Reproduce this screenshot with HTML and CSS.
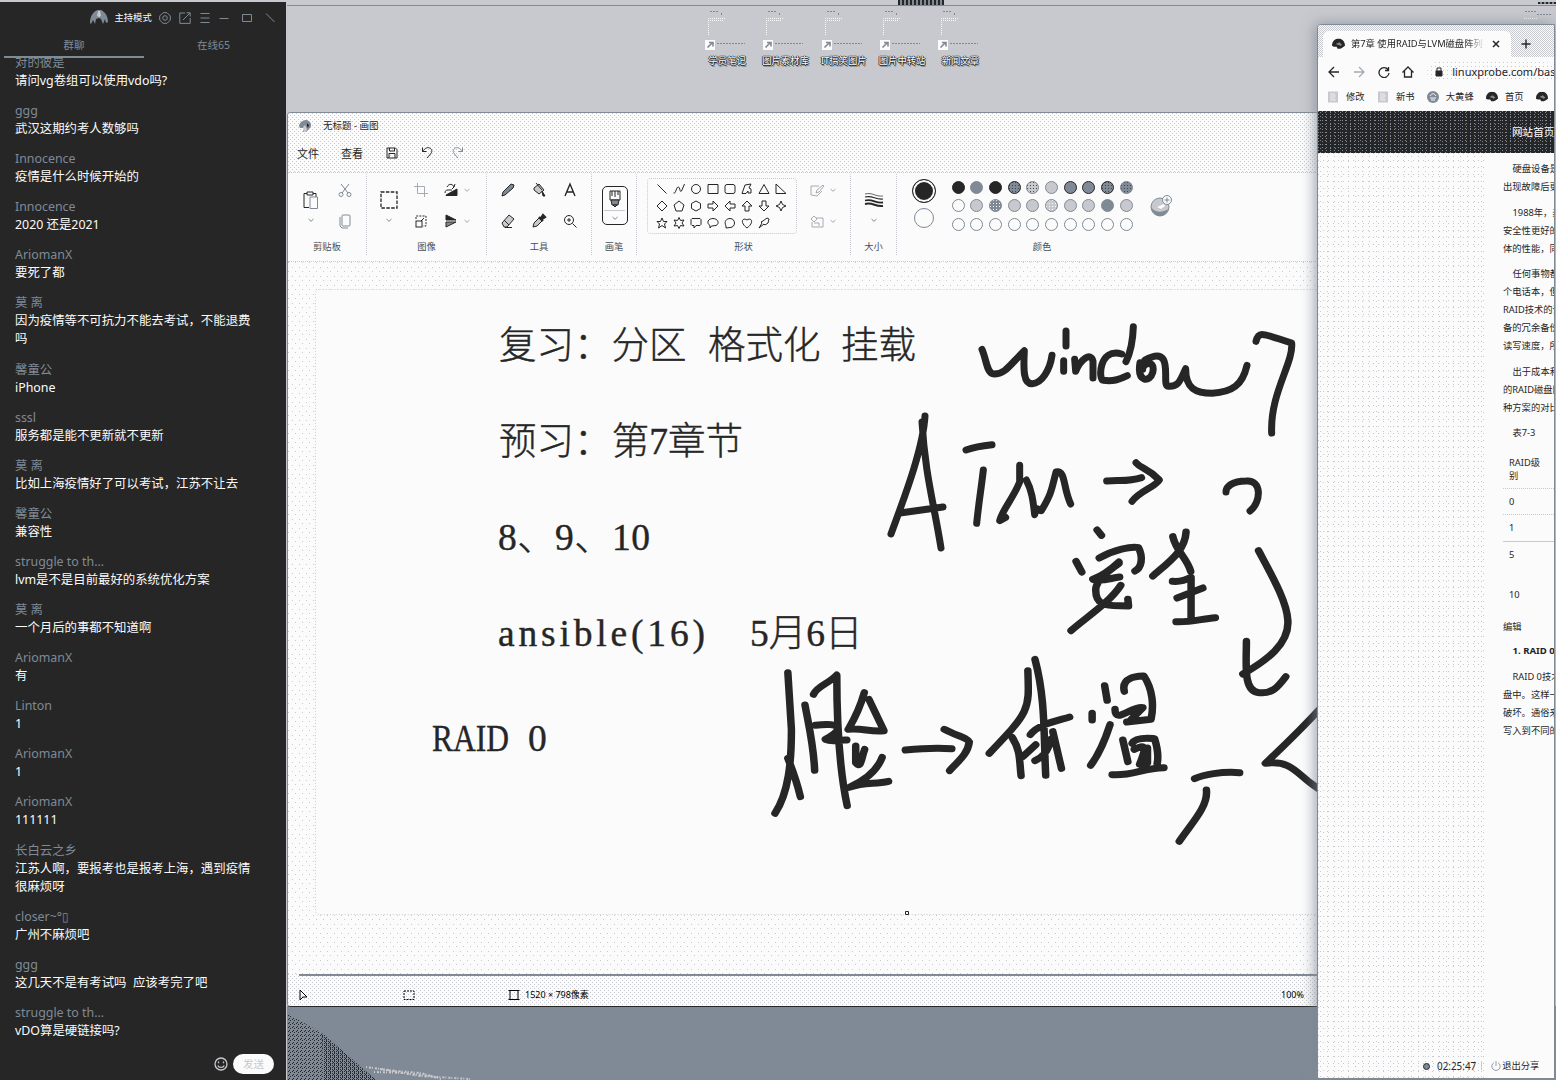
FILE: index.html
```html
<!DOCTYPE html>
<html lang="zh-CN">
<head>
<meta charset="utf-8">
<title>无标题 - 画图</title>
<link rel="stylesheet" href="styles.css">
</head>
<body>
<svg class="defs" width="0" height="0">
  <symbol id="caret" viewBox="0 0 8 8"><path d="M1.500 3 4 5.300 6.500 3"/></symbol>
  <symbol id="brand" viewBox="0 0 14 12"><path d="M0 8C0 2 4 0 7 0s7 2 7 8l-3 2-2 1H6L5 9H2z" fill="#262626" stroke="none"/><path d="m4 6 4-2 3 3-2 1-2-1z" fill="#7f8a96" stroke="none"/></symbol>
  <symbol id="pagemark" viewBox="0 0 12 12"><path d="M1 .5h10v11H1z" fill="#c8c9ce" stroke="none"/><path d="M3 3h5M3 5h6M3 7h5M3 9h6" stroke="#fbfbfb" stroke-width=".8"/></symbol>
</svg>
<div class="screen">
  <aside class="chat">
    <header class="chat-bar">
      <svg class="logo" viewBox="0 0 18 16"><path d="M0 13C0 5 4 1 8 0l3 0c4 2 7 6 7 12l-2 1-1-4-2 5-2-5-2-1-3 1-1 5-2-4-2 4z"/><path class="lit" d="m8 1 2 0 1 5-2 1-2-1z"/></svg>
      <span class="mode">主持模式</span>
      <svg viewBox="0 0 12 12"><path d="M4 .7h4L11.300 4v4L8 11.300H4L.7 8V4z"/><circle cx="6" cy="6" r="2.300"/></svg>
      <svg viewBox="0 0 12 12"><path d="M6 1H.8v10.400h10.400V6M4 8l7-7M7.500.8h3.700v3.700"/></svg>
      <svg viewBox="0 0 12 12"><path d="M1.500 1.500h9M1.500 6h9M1.500 10.500h9"/></svg>
      <svg viewBox="0 0 12 12"><path d="M1.500 6.500h9"/></svg>
      <svg viewBox="0 0 12 12"><path d="M1.500 2.500h9v7h-9z"/></svg>
      <svg viewBox="0 0 12 12"><path d="m2 1.500 8.500 8.500"/></svg>
    </header>
    <nav class="tabs"><span class="tab on">群聊</span><span class="tab">在线65</span></nav>
    <div class="messages">
      <div class="msg"><b>对的彼是</b><p>请问vg卷组可以使用vdo吗?</p></div>
      <div class="msg"><b>ggg</b><p>武汉这期约考人数够吗</p></div>
      <div class="msg"><b>Innocence</b><p>疫情是什么时候开始的</p></div>
      <div class="msg"><b>Innocence</b><p>2020 还是2021</p></div>
      <div class="msg"><b>AriomanX</b><p>要死了都</p></div>
      <div class="msg"><b>莫 离</b><p>因为疫情等不可抗力不能去考试，不能退费吗</p></div>
      <div class="msg"><b>馨童公</b><p>iPhone</p></div>
      <div class="msg"><b>sssl</b><p>服务都是能不更新就不更新</p></div>
      <div class="msg"><b>莫 离</b><p>比如上海疫情好了可以考试，江苏不让去</p></div>
      <div class="msg"><b>馨童公</b><p>兼容性</p></div>
      <div class="msg"><b>struggle to th...</b><p>lvm是不是目前最好的系统优化方案</p></div>
      <div class="msg"><b>莫 离</b><p>一个月后的事都不知道啊</p></div>
      <div class="msg"><b>AriomanX</b><p>有</p></div>
      <div class="msg"><b>Linton</b><p>1</p></div>
      <div class="msg"><b>AriomanX</b><p>1</p></div>
      <div class="msg"><b>AriomanX</b><p>111111</p></div>
      <div class="msg"><b>长白云之乡</b><p>江苏人啊，要报考也是报考上海，遇到疫情很麻烦呀</p></div>
      <div class="msg"><b>closer~&#xb0;▯</b><p>广州不麻烦吧</p></div>
      <div class="msg"><b>ggg</b><p>这几天不是有考试吗&nbsp; 应该考完了吧</p></div>
      <div class="msg"><b>struggle to th...</b><p>vDO算是硬链接吗?</p></div>
    </div>
    <footer class="composer">
      <svg viewBox="0 0 14 14"><circle cx="7" cy="7" r="6"/><path d="M4.500 4.500v1.800M9.500 4.500v1.800M3.800 8.500c1 2.600 5.400 2.600 6.400 0"/></svg>
      <button>发送</button>
    </footer>
  </aside>

  <main class="desktop">
    <div class="strip"><i></i><i class="corner"></i></div>
    <div class="shortcuts">
      <div class="shortcut"><svg viewBox="0 0 44 44"><path class="fold" d="M3.500 24V7.500h17M5 9.500h14"/><path class="edge" d="M5 .5h9M16.500 2v3M12 32.500h28"/><path class="plate" d="M0 29h10v10H0z"/><path class="arrow" d="m2.500 36.500 5-5M4 31.500h4v4"/></svg><span>学员笔记</span></div>
      <div class="shortcut"><svg viewBox="0 0 44 44"><path class="fold" d="M3.500 24V7.500h17M5 9.500h14"/><path class="edge" d="M5 .5h9M16.500 2v3M12 32.500h28"/><path class="plate" d="M0 29h10v10H0z"/><path class="arrow" d="m2.500 36.500 5-5M4 31.500h4v4"/></svg><span>图片素材库</span></div>
      <div class="shortcut"><svg viewBox="0 0 44 44"><path class="fold" d="M3.500 24V7.500h17M5 9.500h14"/><path class="edge" d="M5 .5h9M16.500 2v3M12 32.500h28"/><path class="plate" d="M0 29h10v10H0z"/><path class="arrow" d="m2.500 36.500 5-5M4 31.500h4v4"/></svg><span>IT搞笑图片</span></div>
      <div class="shortcut"><svg viewBox="0 0 44 44"><path class="fold" d="M3.500 24V7.500h17M5 9.500h14"/><path class="edge" d="M5 .5h9M16.500 2v3M12 32.500h28"/><path class="plate" d="M0 29h10v10H0z"/><path class="arrow" d="m2.500 36.500 5-5M4 31.500h4v4"/></svg><span>图片中转站</span></div>
      <div class="shortcut"><svg viewBox="0 0 44 44"><path class="fold" d="M3.500 24V7.500h17M5 9.500h14"/><path class="edge" d="M5 .5h9M16.500 2v3M12 32.500h28"/><path class="plate" d="M0 29h10v10H0z"/><path class="arrow" d="m2.500 36.500 5-5M4 31.500h4v4"/></svg><span>新闻文章</span></div>
      <svg class="far" viewBox="0 0 30 12"><path class="edge" d="M2 .5h11M14 3.500h14"/><path class="fold" d="M1 7.500h13"/></svg>
    </div>
    <svg class="wallpaper" viewBox="0 0 1030 73">
      <defs><pattern id="grain" width="4" height="4" patternUnits="userSpaceOnUse"><path d="M0 0h1v1H0zM2 1h1v1H2zM1 3h1v1H1z" fill="#262626"/></pattern>
      <pattern id="densegrain" width="2" height="2" patternUnits="userSpaceOnUse"><path d="M0 0h1v1H0z" fill="#262626"/></pattern></defs>
      <path d="M0 7 34 26 88 73H0z" fill="url(#grain)"/><path d="m34 26 54 47H36z" fill="url(#densegrain)"/>
      <path d="m78 60 30 4 25 2 20 6M86 65l30 1 32 4M92 62l40 7 50 3" fill="none" stroke="#c8c9ce" stroke-width="2" stroke-dasharray="1 2 2 1"/>
    </svg>

    <section class="paint">
      <div class="paint-top">
        <div class="title"><svg viewBox="0 0 12 12"><path d="M0 6C1 1 5 0 8 0c5 2 5 7 2 9l-3 3H4l1-4H1z" fill="#7f8a96"/><path d="m4 7 2-2 2 4-1 3H5z" fill="#c8c9ce"/><path d="m8 3 2 2-1 3-1-2z" fill="#262626"/></svg><span>无标题 - 画图</span></div>
        <div class="menu"><span>文件</span><span>查看</span>
          <svg viewBox="0 0 12 12"><path d="M1 1h8.500L11 2.500V11H1zM3.500 1v3h5V1M3 11V6.500h6V11"/></svg>
          <svg class="undo" viewBox="0 0 12 12"><path d="M1.500.5v4h4M1.500 4.500C4 1 7-.5 9.500 1.500c3 3 .5 5-3.500 9.500"/></svg>
          <svg class="redo" viewBox="0 0 12 12"><path d="M10.500.5v4h-4M10.500 4.500C8 1 5-.5 2.500 1.500c-3 3-.5 5 3.500 9.500"/></svg>
        </div>
      </div>
      <div class="ribbon">
        <div class="group clip"><div class="tools">
          <div class="tall"><svg class="i20" viewBox="0 0 20 20"><path d="M8 17.500H3v-14h3M12 3.500h3V7M6 2h6v3H6z"/><path class="mid" d="M9 7h7.500v11.500H9z"/></svg><svg class="car"><use href="#caret"/></svg></div>
          <svg class="mid" viewBox="0 0 16 16"><path d="m4 2 7 9M12 2l-7 9"/><circle cx="4" cy="12.500" r="2"/><circle cx="12" cy="12.500" r="2"/></svg>
          <svg class="mid" viewBox="0 0 16 16"><rect x="5" y="2" width="8" height="11" rx="1"/><path d="M3 4v9l2 2h6"/></svg>
        </div><span class="cap">剪贴板</span></div>
        <div class="group image"><div class="tools">
          <div class="tall"><svg class="i20" viewBox="0 0 20 20"><rect x="2" y="2" width="16" height="16" stroke-dasharray="3.500 1.400" stroke-width="1.300"/></svg><svg class="car"><use href="#caret"/></svg></div>
          <svg class="pale" viewBox="0 0 16 16"><path d="M4.500 1v10.500H15M1 4.500h10.500V15"/></svg>
          <svg class="c4" viewBox="0 0 16 16"><path d="M4 5c2-4 6-3 7 0l-2 2M11 5l1-3M2 11c0-2 1-3 3-3h4"/><path d="m3 13 11-6v6.500H3z" fill="#262626"/></svg>
          <svg class="car pale"><use href="#caret"/></svg>
          <svg class="c2" viewBox="0 0 16 16"><path d="M3 6V3h10v10h-3" stroke-dasharray="2 1.200"/><rect x="3" y="8" width="6" height="6"/><path d="m8 8 3-3"/></svg>
          <svg class="c4" viewBox="0 0 16 16"><path d="m3 2 10 5H3z" fill="#262626"/><path d="M3 9h10L3 14z" fill="#7f8a96"/></svg>
          <svg class="car pale"><use href="#caret"/></svg>
        </div><span class="cap">图像</span></div>
        <div class="group kit"><div class="tools">
          <svg viewBox="0 0 16 16"><path d="m2 14 1-4 8-8 3 1-1 3-8 7z" fill="#7f8a96"/></svg>
          <svg viewBox="0 0 16 16"><path d="m3 6 5-4 5 6-5 4-5-4zM5 1l6 7" fill="#c8c9ce"/><path d="m11 9 3 5h-2z" fill="#262626"/></svg>
          <svg viewBox="0 0 16 16"><path d="M3 14 8 2l5 12M5 10h6" stroke-width="1.400"/></svg>
          <svg viewBox="0 0 16 16"><path d="m2 10 7-8 5 4-7 8H4z" fill="#c8c9ce"/><path d="m4 7 5 5M5 14.500h7"/></svg>
          <svg viewBox="0 0 16 16"><path d="m2 14 1-4 5-5 3 3-5 5z" fill="#c8c9ce"/><path d="m8 4 4 4M10 5l2-3 2 2-3 2z" stroke-width="2.200"/></svg>
          <svg viewBox="0 0 16 16"><circle cx="7" cy="7" r="4.500"/><path d="m10.500 10.500 4 4M7 5v4M5 7h4"/></svg>
        </div><span class="cap">工具</span></div>
        <div class="group brush"><div class="tools"><div class="brush-btn">
          <svg viewBox="0 0 14 20"><path d="M2 2h10v9H2z"/><path d="M4 2v5M7 2v6M10 2v4"/><path d="M3 11h8l-1 5H4z" fill="#7f8a96"/><path d="M5 16h4l-2 2z" fill="#7f8a96"/></svg><i></i><svg class="car"><use href="#caret"/></svg></div>
        </div><span class="cap">画笔</span></div>
        <div class="group shapes"><div class="tools">
          <div class="gallery">
            <svg viewBox="0 0 12 12"><path d="m1.500 1.500 9 9"/></svg>
            <svg viewBox="0 0 12 12"><path d="M.5 10c2 2 3-7 5-6s1 6 3 4l3-7"/></svg>
            <svg viewBox="0 0 12 12"><circle cx="6" cy="6" r="4.500"/></svg>
            <svg viewBox="0 0 12 12"><path d="M1 1.500h10v9H1z"/></svg>
            <svg viewBox="0 0 12 12"><rect x="1" y="1.500" width="10" height="9" rx="2"/></svg>
            <svg viewBox="0 0 12 12"><path d="M1 10.500 4 2l6-1-2 4 2 1v4H7V8l-2 2.500z"/></svg>
            <svg viewBox="0 0 12 12"><path d="m6 1.500 5 9H1z"/></svg>
            <svg viewBox="0 0 12 12"><path d="M1 1v9.500h10z"/></svg>
            <svg viewBox="0 0 12 12"><path d="m6 1 5 5-5 5-5-5z"/></svg>
            <svg viewBox="0 0 12 12"><path d="m6 1 5 4-2 6H3L1 5z"/></svg>
            <svg viewBox="0 0 12 12"><path d="m6 1 4.500 2.500v5L6 11 1.500 8.500v-5z"/></svg>
            <svg viewBox="0 0 12 12"><path d="M1 4h5V1l5 5-5 5V8H1z"/></svg>
            <svg viewBox="0 0 12 12"><path d="M11 4H6V1L1 6l5 5V8h5z"/></svg>
            <svg viewBox="0 0 12 12"><path d="M4 11V6H1l5-5 5 5H8v5z"/></svg>
            <svg viewBox="0 0 12 12"><path d="M4 1v5H1l5 5 5-5H8V1z"/></svg>
            <svg viewBox="0 0 12 12"><path d="m6 1 1.500 3.500L11 6 7.500 7.500 6 11 4.500 7.500 1 6l3.500-1.500z"/></svg>
            <svg viewBox="0 0 12 12"><path d="m6 1 1.500 3.500H11L8.500 7l1 4L6 8.500 2.500 11l1-4L1 4.500h3.500z"/></svg>
            <svg viewBox="0 0 12 12"><path d="m6 .5 1.500 3 3.500-.5-2 3 2 3-3.500-.5-1.500 3-1.500-3L1 9l2-3-2-3 3.500.5z"/></svg>
            <svg viewBox="0 0 12 12"><path d="M2 1.500h8l1 1v5l-1 1H6L4 11V8.500H2l-1-1v-5z"/></svg>
            <svg viewBox="0 0 12 12"><path d="M4.500 9 3 11V8.500C-1 6 1 1.500 6 1.500s7 5 3 7z"/></svg>
            <svg viewBox="0 0 12 12"><path d="M2 11V9C-.5 4 3 1.500 6 1.500c6 0 6 9 0 9z"/></svg>
            <svg viewBox="0 0 12 12"><path d="M6 11C-2 5 2 0 6 3c4-3 8 2 0 8z"/></svg>
            <svg viewBox="0 0 12 12"><path d="m5 4 4-3 2 1-1 4-3 2-1-1-5 4 3-5-1-1z"/></svg>
          </div>
          <div class="shape-opts">
            <svg class="pale" viewBox="0 0 16 16"><path d="M10 4H2v9l6 1 5-5M7 11l1-3 6-5 1 1-5 6z"/></svg><svg class="car pale"><use href="#caret"/></svg>
            <svg class="pale" viewBox="0 0 16 16"><path d="M7 5h7v9H3V9M2 6l3-3 3 3-3 3zM5 10h5v3"/></svg><svg class="car pale"><use href="#caret"/></svg>
          </div>
        </div><span class="cap">形状</span></div>
        <div class="group size"><div class="tools"><div class="tall"><svg class="i20" viewBox="0 0 20 20"><path d="M1 4c8-2 10 3 18 2" stroke-width=".7"/><path d="M1 7c8-2 10 3 18 2" stroke-width="1.200"/><path d="M1 10.500c8-2 10 3 18 2" stroke-width="1.800"/><path d="M1 14c8-2 10 3 18 2" stroke-width="2"/></svg><svg class="car"><use href="#caret"/></svg></div></div><span class="cap">大小</span></div>
        <div class="group colors"><div class="tools">
          <div class="current"><i class="fore"></i><i class="back"></i></div>
          <div class="swatches">
            <i class="k"></i><i class="g"></i><i class="k"></i><i class="g dk dots"></i><i class="l dots"></i><i class="l"></i><i class="g dk"></i><i class="g dk"></i><i class="g dk dots"></i><i class="g dots"></i>
            <i></i><i class="l"></i><i class="g lit"></i><i class="l"></i><i class="l"></i><i class="l lit"></i><i class="l"></i><i class="l"></i><i class="g"></i><i class="l"></i>
            <i></i><i></i><i></i><i></i><i></i><i></i><i></i><i></i><i></i><i></i>
          </div>
          <svg class="wheel" viewBox="0 0 24 24"><circle cx="11" cy="14" r="9" fill="#c8c9ce" stroke="#7f8a96"/><path d="M2 14c4 6 12 6 17 2-1 9-15 10-17-2z" fill="#7f8a96" stroke="none"/><path d="m8 14 7-3 1 2-4 3z" fill="#fbfbfb" stroke="none"/><circle cx="18" cy="7" r="4.500" fill="#fbfbfb" stroke="#7f8a96"/><path d="M18 4.500v5M15.500 7h5" stroke="#7f8a96"/></svg>
        </div><span class="cap">颜色</span></div>
      </div>
      <div class="work">
        <svg class="board" viewBox="288 262 1029 712">
          <rect x="315.500" y="289.500" width="1010" height="625" rx="4" fill="#fbfbfb" stroke="#c8c9ce" stroke-dasharray="1 2"/>
          <g class="typed">
            <text x="499" y="358">复习：分区</text><text x="708" y="358">格式化</text><text x="841" y="358">挂载</text>
            <text x="499" y="454" textLength="244">预习：第7章节</text>
            <text x="498" y="550" textLength="152">8、9、10</text>
            <text x="498" y="646" textLength="207">ansible(16)</text><text x="750" y="646">5月6日</text>
            <text x="432" y="751" textLength="77" lengthAdjust="spacingAndGlyphs">RAID</text><text x="528" y="751">0</text>
          </g>
          <g class="ink" transform="translate(970 310) scale(.33333)">
            <path d="M36 118C50 150 50 192 72 192 105 192 115 170 163 122 160 180 160 222 187 221 215 220 240 180 246 136M288 63v45M281 152v32M314 148l3 36c15-35 45-60 52-30v50M455 132c-70-20-70 80-55 79 30 4 45-2 72-14M490 50c-2 60-12 85-22 105M510 158c-10 60 30 60 38 30 10-40-30-30-30-10M525 150c90-50 50 70 67 78 35 5 40-20 55-52 0 60 30 74 80 74 60-4 90-24 104-84"/>
            <path d="M858 94C866 60 880 72 965 99c6 60-65 150-60 270M-12 420c25-9 50-13 78-16M40 480c-7 60-14 100-20 160M149 466v50c-20 50-50 80-60 116l18-10M169 510c16 30 20 60 25 104 8-30 8-12 20-12 30-50 30-60 44-116 30-5 20 45 44 96M410 513c40-4 60 4 105-10M498 458c15 18 35 15 70 52-18 25-55 30-82 64M768 546c0-18 20-32 60-33 50-5 45 65 12 90"/>
          </g>
          <path class="ink real" d="M891 534C901 506 923 451 925 416M922 422c3 52 12 82 19 126M900 513 943 507"/>
          <g class="ink" transform="translate(760 520) scale(.35714 .33333)">
            <path d="M944 30l12 16M885 124l16 32M950 114C990 90 1040 78 1060 83c14 30 8 60-10 70M1005 126c-30 30-55 45-73 52 25 8 50-4 75-7M1005 130c-20 15-66 50-65 80 0 55 40 45 92 48l-2-20M1010 196c-30 50-95 95-139 136M1156 50c10 45 40 65 50 104M1193 36C1190 95 1140 130 1100 168M1155 184c20 2 35-2 52-12v126M1168 234l72-30M1165 305c40 2 70-8 110-12"/>
            <path d="M1396 92c40 80 80 155 82 210 4 70-60 120-126 160M1362 364c0 70-10 152 36 154 35 4 50-14 74-48M78 458l10 170c0 100-8 190-46 252M78 715c15 40 25 70 35 115M126 555c12 70 24 120 27 196M150 523c10-25 40-30 65-58 0 120 5 270 29 392M155 616c70-10 85 10 28 42 20 10 40 0 60 2M292 518c-16 60-34 90-45 110 40-4 60 8 100 4l-42-94M268 678v50c15 20 15-10 25-40M342 712c-14 40-50 70-92 90 45-18 70-8 110-18M407 690c45-5 80-8 130-4M516 628c35 20 65 25 70 38-5 40-35 60-55 86M750 452c4 120 6 120-108 248M770 418c30 120 24 230 30 348M757 644c20-30 70-40 110-53M706 652c24 40 20 70 25 115M772 674l-35 35M770 722c24-12 35-25 45-65M820 635l24 110"/>
            <path d="M965 497l7 44M930 580v20M980 614c-12 40-25 80-54 122M1020 514c-10-45 40-45 55-46 25 40 28 90 20 130l-68 8M994 568c0 45 45-10 78-5l-35 38M1016 660l14 65M1042 670c10-20 50-15 63-14 10 35 10 60 7 75M1048 688c30-15 36-12 15 45l22-5V684M986 764c60 4 85-20 145-21M1217 776c25-12 75-22 126-18M1250 810c5 50-42 100-76 154M1570 564c-60 70-95 105-155 166 80-12 90 40 155 80"/>
          </g>
          <path d="M905.500 911.500h3v3h-3z" fill="#fbfbfb" stroke="#262626"/>
        </svg>
      </div>
      <div class="status">
        <svg viewBox="0 0 12 12"><path d="M2 1v10l3-3h4z"/></svg>
        <svg viewBox="0 0 12 12"><path d="M1 2h10v8.500H1z" stroke-dasharray="2 1"/></svg>
        <svg viewBox="0 0 12 12"><path d="M2 1.500h8v9H2zM.5 1.500h11M.5 10.500h11"/></svg>
        <span>1520 × 798像素</span><span class="zoom">100%</span>
      </div>
    </section>

    <section class="browser">
      <div class="tabstrip"><div class="page-tab"><svg viewBox="0 0 14 12"><use href="#brand"/></svg><span>第7章 使用RAID与LVM磁盘阵列</span><svg class="x" viewBox="0 0 10 10"><path d="m2 2 6 6M8 2 2 8"/></svg></div><svg class="plus" viewBox="0 0 10 10"><path d="M5 .5v9M.5 5h9"/></svg></div>
      <div class="address">
        <svg viewBox="0 0 12 12"><path d="M11 6H1.500M6 1 1 6l5 5"/></svg>
        <svg class="pale" viewBox="0 0 12 12"><path d="M1 6h9.500M6 1l5 5-5 5"/></svg>
        <svg viewBox="0 0 12 12"><path d="M10 3.500a5 5 0 1 0 1 3.500M10.500 1v3.500H7"/></svg>
        <svg viewBox="0 0 12 12"><path d="M.5 6.500 6 1l5.500 5.500M2.500 5v6h7V5"/></svg>
        <div class="url"><svg viewBox="0 0 8 10"><path d="M1 4h6v5H1z" fill="#262626"/><path d="M2 4V1h4v3"/></svg><span>linuxprobe.com/bas</span></div>
      </div>
      <div class="bookmarks">
        <svg viewBox="0 0 12 12"><use href="#pagemark"/></svg><span>修改</span>
        <svg viewBox="0 0 12 12"><use href="#pagemark"/></svg><span>新书</span>
        <svg class="bee" viewBox="0 0 12 12"><circle cx="6" cy="6" r="6" fill="#7f8a96" stroke="none"/><path d="M3 5c2-3 4-3 6 0M3 7h6M4 9h4" stroke="#fbfbfb"/></svg><span>大黄蜂</span>
        <svg viewBox="0 0 14 12"><use href="#brand"/></svg><span>首页</span>
        <svg viewBox="0 0 14 12"><use href="#brand"/></svg>
      </div>
      <div class="site-nav"><span>网站首页</span></div>
      <div class="page">
        <div class="gutter"></div>
        <article>
          <p>硬盘设备是<br>出现故障后更</p>
          <p>1988年，美<br>安全性更好的<br>体的性能，同</p>
          <p>任何事物都<br>个电话本，但<br>RAID技术的设<br>备的冗余备份<br>读写速度，所</p>
          <p>出于成本和<br>的RAID磁盘阵<br>种方案的对比</p>
          <p>表7-3</p>
          <div class="levels"><div class="head">RAID级<br>别</div><div>0</div><div>1</div><div class="five">5</div><div class="ten">10</div></div>
          <p class="flat">编辑</p>
          <p class="strong">1. RAID 0</p>
          <p>RAID 0技术<br>盘中。这样一<br>破坏。通俗来<br>写入到不同的</p>
        </article>
      </div>
      <div class="share"><i></i><span class="clock">02:25:47</span><span class="bar"></span><svg viewBox="0 0 12 12"><path d="M3.500 2a5 5 0 1 0 5 0M6 0v6"/></svg><span>退出分享</span></div>
    </section>
  </main>
</div>
</body>
</html>
```

FILE: styles.css
```css
:root {
  --ink: #262626;
  --mid: #7f8a96;
  --pale: #c8c9ce;
  --paper: #fbfbfb;
  --dot: conic-gradient(at 1px 1px, transparent 75%, var(--pale) 0);
}
* { box-sizing: border-box; }
body { margin: 0; font: 9.300px/18px "Noto Sans", "Noto Sans CJK SC", sans-serif; color: var(--ink); overflow: hidden; }
p { margin: 0; }
svg { display: block; fill: none; stroke: currentColor; stroke-width: 1; flex: none; }
.defs { position: absolute; }
.screen { display: grid; grid-template-columns: 287px 1fr; width: 1556px; height: 1080px; background: var(--pale); overflow: hidden; }

/* chat */
.chat { margin-top: 2px; width: 286px; height: 1078px; background: var(--ink); color: var(--mid); display: flex; flex-direction: column; }
.chat-bar { height: 32px; display: flex; align-items: center; padding-left: 90px; gap: 8.500px; flex: none; }
.chat-bar svg { width: 12px; height: 12px; }
.chat-bar .logo { width: 18px; height: 16px; fill: var(--mid); stroke: none; margin-right: -2px; }
.logo .lit { fill: var(--pale); }
.mode { color: var(--paper); margin-right: -1px; white-space: nowrap; }
.chat-bar svg:nth-of-type(3) { margin-left: -1px; }
.chat-bar svg:nth-of-type(5) { margin-left: -2px; }
.chat-bar svg:nth-of-type(6) { margin-left: 3px; }
.chat-bar svg:nth-of-type(7) { margin-left: 2px; }
.tabs { height: 24px; display: flex; padding-left: 4px; font-size: 10.500px; flex: none; }
.tab { width: 139px; text-align: center; line-height: 23px; }
.tab.on { border-bottom: 2px solid var(--mid); width: 140px; }
.messages { flex: 1; overflow: hidden; padding: 0 30px 0 15px; margin-top: -1px; }
.messages::before { content: ""; display: block; margin-top: -3px; }
.msg { font-size: 12.400px; line-height: 18px; margin-bottom: 12.100px; }
.msg:first-child { margin-top: -3px; }
.msg b { font-weight: 400; display: block; height: 18px; }
.msg p { color: var(--paper); }
.composer { height: 32px; display: flex; align-items: center; justify-content: flex-end; gap: 5px; padding: 0 12px 0 0; flex: none; }
.composer svg { width: 14px; height: 14px; color: var(--pale); stroke-width: 1.300; }
.composer button { width: 41px; height: 20px; border: 0; border-radius: 10px; background: var(--paper); color: var(--pale); font: inherit; font-size: 10.500px; padding: 0; line-height: 20px; }

/* desktop */
.desktop { position: relative; overflow: hidden; background: linear-gradient(var(--pale) 1006px, var(--mid) 0); }
.strip { height: 6px; border-bottom: 1px solid var(--mid); display: flex; justify-content: space-between; }
.strip i { margin-left: 611px; width: 46px; height: 5px; background: repeating-linear-gradient(90deg, var(--ink) 0 2px, var(--mid) 2px 4px); }
.strip .corner { margin: 2px 0 0; width: 18px; height: 2px; }
.shortcuts { display: flex; padding: 5px 0 0 411px; }
.shortcut { width: 58.300px; text-align: center; white-space: nowrap; }
.shortcut svg { width: 44px; height: 44px; margin-left: 7px; }
.shortcut span { display: block; line-height: 12px; color: var(--paper); text-shadow: 1px 0 var(--ink), -1px 0 var(--ink), 0 1px var(--ink), 0 -1px var(--mid), 1px 2px var(--mid); }
.shortcuts .far { width: 30px; height: 12px; margin-left: 534px; }
.fold { stroke: var(--paper); stroke-dasharray: 1 1; }
.edge { stroke: var(--mid); stroke-dasharray: 2 1; }
.plate { fill: var(--paper); stroke: none; }
.arrow { stroke: var(--mid); stroke-width: 1.600; }
.wallpaper { position: absolute; left: 1px; top: 1007px; width: 1030px; height: 73px; stroke: none; }

/* paint window */
.paint { position: absolute; left: 0; top: 112px; width: 1060px; height: 895px; background: var(--paper); border: 1px solid var(--mid); border-bottom-color: var(--ink); border-radius: 4px 0 0 4px; display: flex; flex-direction: column; overflow: hidden; }
.paint-top, .status { background: var(--dot) 0 0 / 4px 4px, var(--dot) 2px 2px / 4px 4px, var(--paper); }
.paint-top { height: 59px; }
.title { height: 25px; display: flex; align-items: center; gap: 12px; padding-left: 11px; }
.title svg { width: 12px; height: 12px; stroke: none; }
.title span { font-size: 9.500px; }
.menu { display: flex; align-items: center; height: 31px; padding-left: 9px; font-size: 11px; gap: 22px; }
.menu svg { width: 12px; height: 12px; margin: -2px 0 0 1px; }
.menu .redo { color: var(--mid); margin-left: -3px; }
.ribbon { height: 90px; display: flex; padding-top: 1px; border-bottom: 1px dotted var(--pale); border-top: 1px dotted var(--pale); flex: none; }
.group { display: flex; flex-direction: column; border-right: 1px dotted var(--pale); margin-bottom: 6px; flex: none; }
.tools { height: 62px; flex: none; display: grid; grid-template-rows: 31px 31px; align-items: center; justify-items: center; justify-content: start; }
.cap { text-align: center; color: #46505a; margin-top: 2px; }
.tools svg { width: 16px; height: 16px; }
.tools svg.car { width: 8px; height: 8px; color: var(--mid); }
.tools svg.i20 { width: 20px; height: 20px; }
.tools svg.mid, .mid { color: var(--mid); }
.tools svg.pale, .address .pale { color: #a4abb3; }
.tall { grid-row: span 2; display: flex; flex-direction: column; align-items: center; gap: 6px; padding-top: 4px; }
.clip { width: 79px; }
.clip .tools { grid-template-columns: 46px 22px; }
.image { width: 120px; }
.image .tools { grid-template-columns: 44px 19px 11px 20px 12px; }
.image .tall { grid-row: 1 / 3; }
.c4 { grid-column: 4; }
.c2 { grid-column: 2; }
.kit { width: 105px; }
.kit .tools { grid-template-columns: 31px 31px 31px; padding-left: 5px; }
.brush { width: 45px; }
.brush .tools, .size .tools { grid-template-columns: 45px; }
.brush-btn { grid-row: span 2; width: 26px; height: 39px; border: 1.500px solid var(--ink); border-radius: 5px; display: flex; flex-direction: column; align-items: center; padding-top: 2px; }
.tools .brush-btn svg { width: 14px; height: 20px; }
.tools .brush-btn svg.car { width: 8px; height: 8px; margin-top: 3px; }
.brush-btn i { width: 21px; height: 1px; margin-top: 1px; background: var(--pale); }
.shapes { width: 214px; }
.shapes .tools { display: flex; align-items: flex-start; padding: 4px 0 0 10px; }
.gallery { width: 150px; height: 56px; border: 1px dotted var(--pale); border-radius: 4px; display: grid; grid-template-columns: repeat(8, 17px); grid-template-rows: repeat(3, 17px); align-items: center; justify-items: center; padding: 1px 0 0 5px; }
.tools .gallery svg { width: 12px; height: 12px; }
.shape-opts { margin: -4px 0 0 12px; display: grid; grid-template: 31px 31px / 16px 15px; align-items: center; justify-items: center; }
.size { width: 46px; }
.colors { width: 290px; border: 0; }
.colors .tools { display: flex; align-items: flex-start; }
.current { display: grid; justify-items: center; gap: 5px; padding: 5px 0 0 15px; }
.fore, .back { border-radius: 50%; border: 1px solid var(--mid); }
.fore { width: 24px; height: 24px; background: var(--ink); border-color: var(--ink); box-shadow: inset 0 0 0 2px var(--paper); }
.back { width: 20px; height: 20px; }
.swatches { display: grid; grid-template-columns: repeat(10, 18.650px); grid-template-rows: repeat(3, 18.500px); justify-items: center; align-items: center; padding: 4px 0 0 13px; }
.swatches i { width: 13px; height: 13px; border: 1px solid var(--mid); border-radius: 50%; }
.swatches .k { background: var(--ink); border-color: var(--ink); }
.swatches .g { background-color: var(--mid); }
.swatches .l { background-color: var(--pale); }
.swatches .dk { border-color: var(--ink); }
.swatches .dots { background-image: conic-gradient(at 1px 1px, transparent 75%, #404850 0); background-size: 3px 3px; }
.swatches .lit { background-image: conic-gradient(at 1px 1px, transparent 75%, var(--paper) 0); background-size: 3px 3px; }
.tools .wheel { width: 24px; height: 24px; margin: 19px 0 0 14px; }
.work { height: 712px; flex: none; background: var(--dot) 0 0 / 7px 9px, var(--dot) 4px 5px / 7px 9px; }
.board { width: 1029px; height: 712px; }
.typed { font: 37.500px "Liberation Serif", "Noto Sans CJK SC", serif; font-weight: 300; fill: var(--ink); stroke: var(--ink); stroke-width: .4; }
.ink { stroke: var(--ink); stroke-width: 21; stroke-linecap: round; stroke-linejoin: round; }
.ink.real { stroke-width: 7; }
.status { flex: 1; display: flex; align-items: center; position: relative; padding: 10px 0 0 10px; font-size: 9px; color: #000; border-top: 0; }
.status::before { content: ""; position: absolute; left: 11px; right: 0; top: 0; height: 2px; background: var(--mid); }
.status svg { width: 12px; height: 12px; margin-right: 93px; }
.status svg:nth-of-type(3) { margin-right: 5px; }
.zoom { margin-left: auto; padding-right: 42px; }

/* browser window */
.browser { position: absolute; left: 1030px; top: 24px; width: 238px; height: 1055px; background: var(--paper); border: 1px solid var(--mid); border-radius: 4px 0 0 0; box-shadow: -2px 0 14px rgba(127, 138, 150, .8); display: flex; flex-direction: column; overflow: hidden; white-space: nowrap; }
.tabstrip { height: 32px; display: flex; align-items: center; background: repeating-conic-gradient(var(--pale) 0 25%, var(--paper) 0 50%) 0 0 / 2px 2px; flex: none; }
.page-tab { margin: 6px 0 0 5px; width: 188px; height: 26px; border-radius: 6px 6px 0 0; background: var(--paper); display: flex; align-items: center; padding: 0 7px 0 9px; gap: 5px; }
.page-tab svg { width: 13px; height: 12px; }
.page-tab span { margin-left: 1px; width: 134px; overflow: hidden; -webkit-mask: linear-gradient(90deg, #000 115px, transparent); mask: linear-gradient(90deg, #000 115px, transparent); }
.page-tab .x { width: 10px; height: 10px; margin-left: 1px; stroke-width: 1.500; }
.plus { width: 10px; height: 10px; margin: 6px 0 0 10px; stroke-width: 1.400; }
.address { height: 29px; display: flex; align-items: center; gap: 12.800px; padding-left: 10px; flex: none; }
.address > svg { width: 12px; height: 12px; stroke-width: 1.300; }
.url { display: flex; align-items: center; gap: 9px; height: 20px; margin-left: 0; padding-left: 8px; border-radius: 10px; background: var(--dot) 0 0 / 4px 4px; font-size: 11px; }
.url svg { width: 8px; height: 10px; }
.bookmarks { height: 25px; display: flex; align-items: center; padding-left: 9px; padding-bottom: 3px; gap: 7px; flex: none; }
.bookmarks svg { width: 12px; height: 12px; }
.bookmarks span { margin-right: 5.300px; }
.site-nav { height: 42px; flex: none; padding: 12px 0 0 194px; font-size: 10.600px; color: var(--paper); background: conic-gradient(at 1px 1px, transparent 75%, var(--mid) 0) 0 0 / 4px 3px, conic-gradient(at 1px 1px, transparent 75%, var(--mid) 0) 2px 1px / 5px 4px, var(--ink); }
.page { flex: 1; display: flex; }
.gutter { flex: none; width: 170px; background: var(--dot) 0 0 / 5px 7px, var(--dot) 2px 3px / 7px 5px; }
article { flex: none; width: 66px; overflow: hidden; padding: 7px 0 0 15px; }
article p { text-indent: 9.500px; margin-bottom: 7.600px; }
article .flat { text-indent: 0; margin-bottom: 6.500px; }
.strong { font-weight: 700; font-size: 9.600px; }
.levels { line-height: 13px; margin: 7px 0 16px; }
.levels div { height: 26px; padding: 6.500px 6px 0; border-bottom: 1px dotted var(--pale); }
.levels .head { height: 39px; padding-top: 6px; }
.levels div:nth-child(3) { border-bottom: 1px solid var(--pale); height: 27px; }
.levels .five { height: 40px; border: 0; }
.levels .ten { height: 20px; border: 0; }
.share { position: absolute; right: 0; bottom: 1px; width: 136px; height: 22px; display: flex; align-items: center; font-size: 9.900px; color: var(--ink); }
.share i { width: 7px; height: 7px; border-radius: 50%; background: var(--mid); border: 1px solid var(--ink); margin: 0 7px 0 5px; }
.share .bar { width: 1px; height: 8px; background: var(--pale); margin: 0 9px 0 5px; }
.share svg { width: 10px; height: 10px; margin-right: 1px; color: var(--mid); }
.share span:last-child { font-size: 9.300px; }
```
